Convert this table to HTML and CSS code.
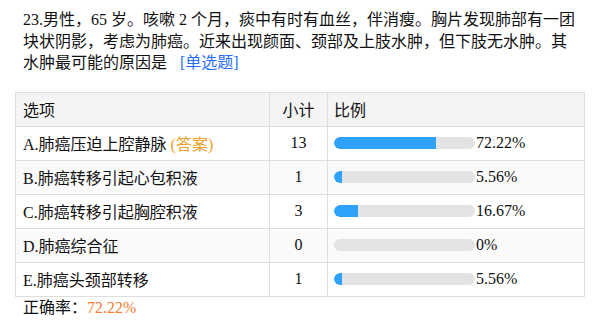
FILE: index.html
```html
<!DOCTYPE html>
<html lang="zh">
<head>
<meta charset="utf-8">
<link rel="stylesheet" href="styles.css">
</head>
<body>
<div class="page">
  <div class="question">23.男性，65 岁。咳嗽 2 个月，痰中有时有血丝，伴消瘦。胸片发现肺部有一团块状阴影，考虑为肺癌。近来出现颜面、颈部及上肢水肿，但下肢无水肿。其水肿最可能的原因是<span class="type">[单选题]</span></div>
  <table class="stats">
    <thead>
      <tr><th class="c-opt">选项</th><th class="c-num">小计</th><th class="c-pct">比例</th></tr>
    </thead>
    <tbody>
      <tr><td class="c-opt">A.肺癌压迫上腔静脉 <span class="answer">(答案)</span></td><td class="c-num">13</td><td class="c-pct"><div class="pct"><div class="bar"><div class="fill" style="width:72.22%"></div></div><span>72.22%</span></div></td></tr>
      <tr><td class="c-opt">B.肺癌转移引起心包积液</td><td class="c-num">1</td><td class="c-pct"><div class="pct"><div class="bar"><div class="fill" style="width:5.56%"></div></div><span>5.56%</span></div></td></tr>
      <tr><td class="c-opt">C.肺癌转移引起胸腔积液</td><td class="c-num">3</td><td class="c-pct"><div class="pct"><div class="bar"><div class="fill" style="width:16.67%"></div></div><span>16.67%</span></div></td></tr>
      <tr><td class="c-opt">D.肺癌综合征</td><td class="c-num">0</td><td class="c-pct"><div class="pct"><div class="bar"><div class="fill" style="width:0%"></div></div><span>0%</span></div></td></tr>
      <tr><td class="c-opt">E.肺癌头颈部转移</td><td class="c-num">1</td><td class="c-pct"><div class="pct"><div class="bar"><div class="fill" style="width:5.56%"></div></div><span>5.56%</span></div></td></tr>
    </tbody>
  </table>
  <div class="rate">正确率：<span class="rate-val">72.22%</span></div>
</div>
</body>
</html>
```
FILE: styles.css
```css
html, body {
  margin: 0;
  padding: 0;
  background: #fff;
}
body {
  font-family: "Liberation Serif", "Noto Sans CJK SC", serif;
  font-size: 16px;
  color: #111;
}
.page {
  padding: 9px 14px 0 15px;
  width: 570px;
}
.question {
  padding-left: 8px;
  width: 557px;
  line-height: 21.5px;
}
.type {
  display: inline-block;
  color: #2a6ef5;
  margin-left: 13px;
}
.stats {
  margin-top: 18px;
  width: 570px;
  border-collapse: collapse;
  border: 1px solid #dedede;
}
.stats th, .stats td {
  border: 1px solid #dedede;
  height: 33px;
  padding: 0;
  font-weight: normal;
  text-align: left;
}
.stats thead tr { background: #f4f4f4; }
.stats tbody tr:nth-child(even) { background: #fafafa; }
.c-opt { width: 246px; padding-left: 7px !important; }
.c-num { width: 57px; text-align: center !important; }
.c-pct { padding-left: 6px !important; }
.answer { color: #f0a02a; }
.pct {
  display: flex;
  align-items: center;
}
.bar {
  width: 141px;
  height: 12px;
  background: #e3e3e5;
  border-radius: 6px;
  overflow: hidden;
  margin-right: 1px;
}
.fill {
  height: 100%;
  background: #2ea2f8;
  border-radius: 6px 0 0 6px;
}
.rate {
  padding-left: 8px;
  line-height: 20px;
  margin-top: 1px;
}
.rate-val { color: #f97c30; }
```
